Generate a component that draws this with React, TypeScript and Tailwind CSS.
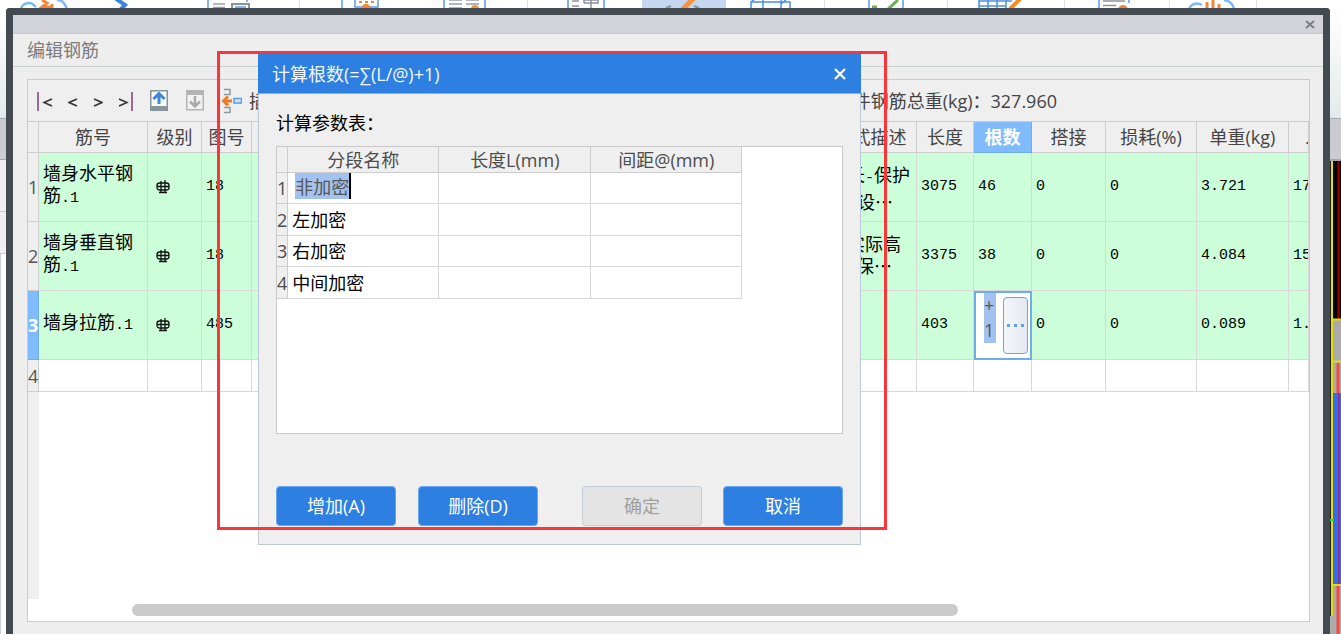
import { ReactNode } from 'react';

const uiFont = "font-['Open_Sans','Noto_Sans_CJK_SC',sans-serif]";
const cellFont = "font-['Liberation_Mono','Noto_Sans_CJK_SC',monospace]";

type Bar = {
  id: number;
  name: string;
  shape: string;
  formula: string;
  length: string;
  count: string;
  lap: string;
  loss: string;
  unitWeight: string;
  totalWeight: string;
  editing?: boolean;
};

const bars: Bar[] = [
  { id: 1, name: '墙身水平钢筋', shape: '18', formula: '墙长-保护层+设…', length: '3075', count: '46', lap: '0', loss: '0', unitWeight: '3.721', totalWeight: '171.166' },
  { id: 2, name: '墙身垂直钢筋', shape: '18', formula: '墙实际高度-保…', length: '3375', count: '38', lap: '0', loss: '0', unitWeight: '4.084', totalWeight: '155.192' },
  { id: 3, name: '墙身拉筋', shape: '485', formula: '', length: '403', count: '+\n1', lap: '0', loss: '0', unitWeight: '0.089', totalWeight: '1.068', editing: true },
];

const segments = ['非加密', '左加密', '右加密', '中间加密'];

// Ribbon icons, only the lower edge of each is visible above the window
const ribbonIcons: { id: string; box: string; art: ReactNode }[] = [
  {
    id: 'sum',
    box: 'ml-5 w-12',
    art: (
      <>
        <path d="M1 9C2 4 7 2 12 3.500L16 7M37 0C43 0 45 4 47 9" fill="none" stroke="#7db8f2" strokeWidth="2.500" />
        <path d="M22 0L27 3L22 7H32V4" fill="none" stroke="#f0873a" strokeWidth="3" />
      </>
    ),
  },
  { id: 'arrow', box: 'ml-[42px] w-5', art: <path d="M5 -2L15 5L9 11" fill="none" stroke="#3f83dc" strokeWidth="4" /> },
  {
    id: 'doc',
    box: 'ml-[76px] w-[44px]',
    art: (
      <>
        <path d="M2 0V8M41 0V2" stroke="#5a9ae4" strokeWidth="1.500" />
        <path d="M7 4H19M7 7.500H19" stroke="#9a9fa4" strokeWidth="1.500" />
        <rect x="26" y="4" width="17" height="8" fill="none" stroke="#8b9299" strokeWidth="2" />
        <path d="M29 7H40" stroke="#5a9ae4" strokeWidth="1.500" />
      </>
    ),
  },
  { id: 'sep1', box: 'ml-[49px] w-px bg-[#e2e2e2]', art: null },
  {
    id: 'calc',
    box: 'ml-10 w-10',
    art: (
      <>
        <path d="M2 0V8M15 0V7H38V0" fill="none" stroke="#5a9ae4" strokeWidth="1.500" />
        <path d="M19 2H22M25 2H28M31 2H34" stroke="#f0873a" strokeWidth="2" />
        <circle cx="26" cy="9" r="5" fill="#f0873a" />
      </>
    ),
  },
  {
    id: 'list',
    box: 'ml-[62px] w-12',
    art: (
      <>
        <path d="M2 0V8M43 0V8" stroke="#5a9ae4" strokeWidth="1.500" />
        <path d="M7 0H20M24 0H37M7 4H20M24 4H37M7 8H20" stroke="#9a9fa4" strokeWidth="1.500" />
        <circle cx="33" cy="9" r="4" fill="#f0953a" />
      </>
    ),
  },
  { id: 'sep2', box: 'ml-[37px] w-px bg-[#e2e2e2]', art: null },
  {
    id: 'pin',
    box: 'ml-[38px] w-10',
    art: (
      <>
        <path d="M2 0V8M38 0V8" stroke="#5a9ae4" strokeWidth="1.500" />
        <path d="M6 1H13M6 6H13M18 3V0H32V3H18M25 0V8" fill="none" stroke="#8b9299" strokeWidth="1.500" />
      </>
    ),
  },
  {
    id: 'active',
    box: 'ml-9 w-[84px] bg-[#c5d6f0]',
    art: (
      <>
        <path d="M52 -2L40 10" stroke="#f39144" strokeWidth="5" />
        <path d="M24 8L29 6M52 6L57 8" stroke="#8b9299" strokeWidth="2" />
      </>
    ),
  },
  {
    id: 'grid',
    box: 'ml-6 w-[42px]',
    art: <path d="M1 8V2H40V8M13 0V8M31 0V8M1 2L6 -2M31 4L38 -2" fill="none" stroke="#4a90e2" strokeWidth="1.500" />,
  },
  { id: 'sep3', box: 'ml-8 w-px bg-[#e2e2e2]', art: null },
  {
    id: 'check',
    box: 'ml-[42px] w-[38px]',
    art: (
      <>
        <path d="M2 0V8M36 0V8" stroke="#5a9ae4" strokeWidth="1.500" />
        <path d="M5 7H10M20 10L31 0" stroke="#6fae54" strokeWidth="3" />
      </>
    ),
  },
  { id: 'sep4', box: 'ml-[42px] w-px bg-[#e2e2e2]', art: null },
  {
    id: 'sheet',
    box: 'ml-[30px] w-11',
    art: (
      <>
        <path d="M1 0V8M10 0V8M19 0V8M28 0V8M1 1H34M1 6H28" stroke="#4a90e2" strokeWidth="1.500" />
        <path d="M42 -1L32 9" stroke="#ee8f2c" strokeWidth="4" />
      </>
    ),
  },
  { id: 'sep5', box: 'ml-[42px] w-px bg-[#e2e2e2]', art: null },
  {
    id: 'report',
    box: 'ml-[33px] w-9',
    art: (
      <>
        <path d="M1 0V8M31 0V3" stroke="#5a9ae4" strokeWidth="1.500" />
        <path d="M5 1H27M5 5.500H18" stroke="#8b9299" strokeWidth="1.500" />
        <circle cx="25" cy="10" r="5" fill="#f0873a" />
      </>
    ),
  },
  { id: 'sep6', box: 'ml-[35px] w-px bg-[#e2e2e2]', art: null },
  {
    id: 'cloud',
    box: 'ml-[18px] w-12',
    art: (
      <>
        <path d="M1 9C3 4 8 2 14 5M36 0C42 1 45 4 46 9" fill="none" stroke="#7db8f2" strokeWidth="2.500" />
        <path d="M19 8V2M25 8V0M31 8V4" stroke="#f0873a" strokeWidth="3" />
      </>
    ),
  },
  { id: 'sep7', box: 'ml-5 w-px bg-[#e2e2e2]', art: null },
];

function Ribbon() {
  return (
    <div className="flex h-2 shrink-0 overflow-hidden bg-white">
      {ribbonIcons.map((icon) => (
        <div key={icon.id} className={`h-2 shrink-0 ${icon.box}`}>
          {icon.art && <svg className="block h-2 w-full">{icon.art}</svg>}
        </div>
      ))}
    </div>
  );
}

function RebarGrade() {
  return (
    <svg width="14" height="14" viewBox="0 0 14 14" fill="none" stroke="#111" strokeWidth="1.300" aria-label="三级钢">
      <rect x="1" y="3" width="12" height="7" rx="2.500" />
      <path d="M5 1V13M9 0V13M3 12.500H11M1 6.500H13" />
    </svg>
  );
}

function Toolbar() {
  return (
    <div className="flex h-[42px] shrink-0 items-center border-b border-[#c9cbcd] bg-[#efefef] text-lg leading-6 text-[#444]">
      <div className="flex items-center gap-[15px] pl-2">
        <button type="button" aria-label="首行">
          <svg className="block" width="17" height="20" fill="none" stroke="#333" strokeWidth="1.500">
            <path d="M2 1V20" stroke="#7b3f78" />
            <path d="M16 8L8 11.500L16 15" />
          </svg>
        </button>
        <button type="button" aria-label="上一行">
          <svg className="block" width="10" height="20" fill="none" stroke="#333" strokeWidth="1.500">
            <path d="M9 8L1 11.500L9 15" />
          </svg>
        </button>
        <button type="button" aria-label="下一行">
          <svg className="block" width="10" height="20" fill="none" stroke="#333" strokeWidth="1.500">
            <path d="M1 8L9 11.500L1 15" />
          </svg>
        </button>
        <button type="button" aria-label="末行">
          <svg className="block" width="17" height="20" fill="none" stroke="#333" strokeWidth="1.500">
            <path d="M1 8L9 11.500L1 15" />
            <path d="M14 1V20" stroke="#7b3f78" />
          </svg>
        </button>
        <button type="button" aria-label="上移">
          <svg className="block" width="18" height="21">
            <rect x="0.750" y="0.750" width="16.500" height="19" fill="#f7f9fa" stroke="#87949c" strokeWidth="1.500" />
            <rect y="16" width="18" height="5" fill="#87949c" />
            <path d="M9 14V5M3.500 9L9 3.500L14.500 9" fill="none" stroke="#3c86dd" strokeWidth="3" />
          </svg>
        </button>
        <button type="button" aria-label="下移" className="ml-[3px]">
          <svg className="block" width="18" height="21">
            <rect x="0.750" y="0.750" width="16.500" height="19" fill="#f2f2f2" stroke="#b4b4b4" strokeWidth="1.500" />
            <rect width="18" height="5" fill="#b4b4b4" />
            <path d="M9 6V16M4 11.500L9 16.500L14 11.500" fill="none" stroke="#a9a9a9" strokeWidth="2.500" />
          </svg>
        </button>
        <button type="button" className="ml-[3px] flex items-center gap-[7px]">
          <svg className="block" width="20" height="26" fill="none">
            <path d="M2 1.500H8V6.500H2M2 19.500H8V24.500H2" stroke="#8d9aa0" strokeWidth="1.500" />
            <path d="M10 13H3M6 8.500L1.500 13L6 17.500" stroke="#f07a24" strokeWidth="3" />
            <rect x="12" y="10.500" width="7.500" height="4.500" fill="#cfe2f7" stroke="#5b9be0" strokeWidth="1.500" />
          </svg>
          插入
        </button>
      </div>
      <div className="mr-[252px] ml-auto whitespace-nowrap">单构件钢筋总重(kg)：327.960</div>
    </div>
  );
}

const th = 'overflow-hidden border-r border-b border-[#cdcdcd] bg-[#efefef] p-0 text-center font-normal whitespace-nowrap';
const td = 'overflow-hidden border-r border-b border-[#d8d8d8] py-0 pr-0 pl-1';
const num = `${td} text-[15px]`;

function Formula({ text }: { text: string }) {
  const [head, tail] = text.split('-');
  if (!tail) return <>{head}</>;
  return (
    <>
      {head}
      <span className="font-['Liberation_Mono',monospace] text-[15px]">-</span>
      {tail}
    </>
  );
}

function BarRow({ bar }: { bar: Bar }) {
  return (
    <tr className="h-[69px] bg-[#ccffd9] text-black">
      <th
        scope="row"
        className={
          bar.editing
            ? `border-r border-b border-[#6eaceb] bg-[#80bbfb] p-0 font-bold text-white ${uiFont}`
            : `border-r border-b border-[#cdcdcd] bg-[#efefef] p-0 font-normal text-[#555] ${uiFont}`
        }
      >
        {bar.id}
      </th>
      <td className={`${td} text-lg leading-[22px]`}>
        {bar.name}
        <span className="text-[15px]">.1</span>
      </td>
      <td className={`${td} pl-2`}>
        <RebarGrade />
      </td>
      <td className={num}>{bar.shape}</td>
      <td className={td}></td>
      <td className={`${td} font-['Noto_Sans_CJK_SC',sans-serif] text-lg leading-[22px] break-all`}>
        <Formula text={bar.formula} />
      </td>
      <td className={num}>{bar.length}</td>
      {bar.editing ? (
        <td className="border-2 border-[#6eaceb] bg-white p-0">
          <div className="flex h-[65px] items-start justify-between pr-[2px] pl-2">
            <textarea
              aria-label="根数"
              defaultValue={bar.count}
              rows={2}
              className={`block h-[50px] w-3 resize-none overflow-hidden bg-[#a2c2ef] p-0 text-lg leading-[25px] text-[#555] outline-none ${uiFont}`}
            />
            <button
              type="button"
              aria-label="计算根数"
              className="mt-1 flex h-[57px] w-[25px] items-center justify-center gap-1 rounded border border-[#62a7e8] bg-linear-to-r from-[#f4f6f9] to-[#e4e8f1]"
            >
              <i className="size-[3px] bg-[#5da3e6]" />
              <i className="size-[3px] bg-[#5da3e6]" />
              <i className="size-[3px] bg-[#5da3e6]" />
            </button>
          </div>
        </td>
      ) : (
        <td className={num}>{bar.count}</td>
      )}
      <td className={num}>{bar.lap}</td>
      <td className={num}>{bar.loss}</td>
      <td className={num}>{bar.unitWeight}</td>
      <td className={`${num} whitespace-nowrap`}>{bar.totalWeight}</td>
    </tr>
  );
}

function BarTable() {
  return (
    <table className={`w-full table-fixed border-separate border-spacing-0 text-lg leading-6 ${cellFont}`}>
      <colgroup>
        <col className="w-[11px]" />
        <col className="w-[109px]" />
        <col className="w-[54px]" />
        <col className="w-[50px]" />
        <col />
        <col className="w-[92px]" />
        <col className="w-[57px]" />
        <col className="w-[58px]" />
        <col className="w-[74px]" />
        <col className="w-[91px]" />
        <col className="w-[92px]" />
        <col className="w-[20px]" />
      </colgroup>
      <thead className={`text-[#444] ${uiFont}`}>
        <tr className="h-[31px]">
          <th className={th}></th>
          <th className={th}>筋号</th>
          <th className={th}>级别</th>
          <th className={th}>图号</th>
          <th className={th}></th>
          <th className={th}>公式描述</th>
          <th className={th}>长度</th>
          <th className="border-r border-b border-[#6eaceb] bg-[#80bbfb] p-0 text-center font-bold text-white">根数</th>
          <th className={th}>搭接</th>
          <th className={th}>损耗(%)</th>
          <th className={th}>单重(kg)</th>
          <th className={`${th} pl-4`}>...</th>
        </tr>
      </thead>
      <tbody>
        {bars.map((bar) => (
          <BarRow key={bar.id} bar={bar} />
        ))}
        <tr className="h-8 bg-white">
          <th scope="row" className={`border-r border-b border-[#cdcdcd] bg-[#efefef] p-0 font-normal text-[#555] ${uiFont}`}>
            4
          </th>
          {Array.from({ length: 11 }, (_, i) => (
            <td key={i} className={td}></td>
          ))}
        </tr>
      </tbody>
    </table>
  );
}

function EditorWindow() {
  return (
    <section className="flex min-w-0 flex-1 flex-col rounded-t-sm border-x-[7px] border-t-[7px] border-[#434a52] bg-[#eee]">
      <div className="flex h-[19px] shrink-0 items-center justify-end border-b border-[#c6cacf] bg-[#d3d4da] pr-2">
        <button type="button" aria-label="关闭">
          <svg className="block" width="10" height="9" stroke="#7e7e82" strokeWidth="2">
            <path d="M1 1L9 8M9 1L1 8" />
          </svg>
        </button>
      </div>
      <h1 className="flex h-[33px] shrink-0 items-center border-b border-[#c9ced1] pl-[14px] text-lg leading-6 text-[#7c7c7c]">编辑钢筋</h1>
      <div className="mt-3 mr-[13px] mb-3 ml-[14px] flex min-h-0 flex-1 flex-col overflow-hidden border border-[#c9cbcd] bg-white">
        <Toolbar />
        <BarTable />
        <div className="w-[11px] flex-1 bg-[#efefef]" />
        <div className="flex h-[22px] shrink-0 items-center px-[104px]">
          <div className="h-3 w-[77%] rounded-full bg-[#cbcbcb]" />
        </div>
      </div>
    </section>
  );
}

const gridTh = 'border-r border-b border-[#cdcdcd] bg-[#efefef] p-0 text-center font-normal text-[#4c4c4c]';
const gridTd = 'border-r border-b border-[#d8d8d8] py-0 pr-0 pl-1';
const primary = 'h-10 w-[120px] rounded border border-[#6aa6ee] bg-[#2d7fe2] text-white';

function CountDialog() {
  return (
    <div role="dialog" aria-label="计算根数" className="absolute top-[54px] left-[258px] flex h-[491px] w-[603px] flex-col border border-t-0 border-[#bcc7d8] bg-[#efefef] text-lg leading-6">
      <div className="-mx-px flex h-10 shrink-0 items-center justify-between border-b border-[#7fb3f1] bg-[#2d7fe2] pr-[15px] pl-[14px] text-[#f2f7fe]">
        <h2>计算根数(=∑(L/@)+1)</h2>
        <button type="button" aria-label="关闭">
          <svg className="block" width="12" height="12" stroke="#fff" strokeWidth="2.200">
            <path d="M1 1L11 11M11 1L1 11" />
          </svg>
        </button>
      </div>
      <div className="flex flex-1 flex-col px-[17px] pt-[17px] pb-[18px]">
        <p className="text-black">计算参数表：</p>
        <div className="mt-[11px] h-[288px] border border-[#c9c9c9] bg-white">
          <table className="table-fixed border-separate border-spacing-0">
            <thead>
              <tr className="h-[26px]">
                <th className={`${gridTh} w-[11px]`}></th>
                <th className={`${gridTh} w-[151px]`}>分段名称</th>
                <th className={`${gridTh} w-[152px]`}>长度L(mm)</th>
                <th className={`${gridTh} w-[151px]`}>间距@(mm)</th>
              </tr>
            </thead>
            <tbody>
              {segments.map((name, i) => (
                <tr key={name} className="text-black odd:h-[31px] even:h-8">
                  <th scope="row" className={gridTh}>{i + 1}</th>
                  <td className={gridTd}>
                    {i === 0 ? (
                      <input
                        aria-label="分段名称"
                        defaultValue={name}
                        className="mb-1 ml-[3px] block h-[26px] w-14 border-r-2 border-black bg-[#a2c2ef] p-0 text-[#555] outline-none"
                      />
                    ) : (
                      name
                    )}
                  </td>
                  <td className={gridTd}></td>
                  <td className={gridTd}></td>
                </tr>
              ))}
            </tbody>
          </table>
        </div>
        <div className="mt-auto flex">
          <button type="button" className={primary}>增加(A)</button>
          <button type="button" className={`${primary} ml-[22px]`}>删除(D)</button>
          <button type="button" disabled className="ml-auto h-10 w-[120px] rounded border border-[#c5cad8] bg-[#e4e4e4] text-[#a0a0a0]">确定</button>
          <button type="button" className={`${primary} ml-[21px]`}>取消</button>
        </div>
      </div>
    </div>
  );
}

export default function App() {
  return (
    <main className={`relative flex h-screen flex-col overflow-hidden bg-white ${uiFont}`}>
      <Ribbon />
      <div className="flex min-h-0 flex-1">
        <div className="flex w-[6px] shrink-0 flex-col">
          <div className="h-[111px] border-b border-[#a5a9ac] bg-linear-to-b from-white to-[#e4eaec]" />
          <div className="h-[41px] border-b border-[#a5a9ac] bg-[#c9cbd0]" />
          <div className="h-[52px] border-b border-[#c9ced1] bg-[#eee]" />
          <div className="h-[42px] border-b border-[#c9ced1] bg-[#eee]" />
          <div className="flex-1 border-l border-[#c9ced8] bg-white" />
        </div>
        <EditorWindow />
        <div className="flex w-[11px] shrink-0 flex-col">
          <div className="h-[111px] border-b border-[#a5a9ac] bg-linear-to-b from-white to-[#e4eaec]" />
          <div className="h-[42px] border-b-2 border-[#a5a9ac] bg-[#c9cbd0]" />
          {/* edge of the drawing canvas behind the window */}
          <svg className="block min-h-0 w-full flex-1 bg-[#ababab]">
            <rect width="11" height="158" fill="#000" />
            <path d="M8.500 0V158" stroke="#a00000" strokeWidth="2" />
            <path d="M0 34H3" stroke="#20e020" strokeWidth="2" />
            <path d="M2 158.500H11M2 200.500H11" stroke="#e3da1c" strokeWidth="2" />
            <path d="M8 202V233M8 424V474" stroke="#f24848" strokeWidth="3" />
            <rect x="3" y="232" width="5" height="191" fill="#2f6ff2" />
            <rect x="8" y="232" width="2" height="191" fill="#a0307c" />
            <rect x="10" y="232" width="1" height="191" fill="#2f6ff2" />
            <path d="M2 424H11" stroke="#e3da1c" strokeWidth="2" />
            <path d="M0.500 0V455" stroke="#222" strokeWidth="1" />
            <path d="M2 0V455" stroke="#e6e000" strokeWidth="2" />
            <path d="M0 359H4" stroke="#20e020" strokeWidth="2" />
          </svg>
        </div>
      </div>
      <CountDialog />
      <div className="pointer-events-none absolute top-[51px] left-[217px] h-[479px] w-[670px] border-3 border-[#fb3638]" />
    </main>
  );
}
